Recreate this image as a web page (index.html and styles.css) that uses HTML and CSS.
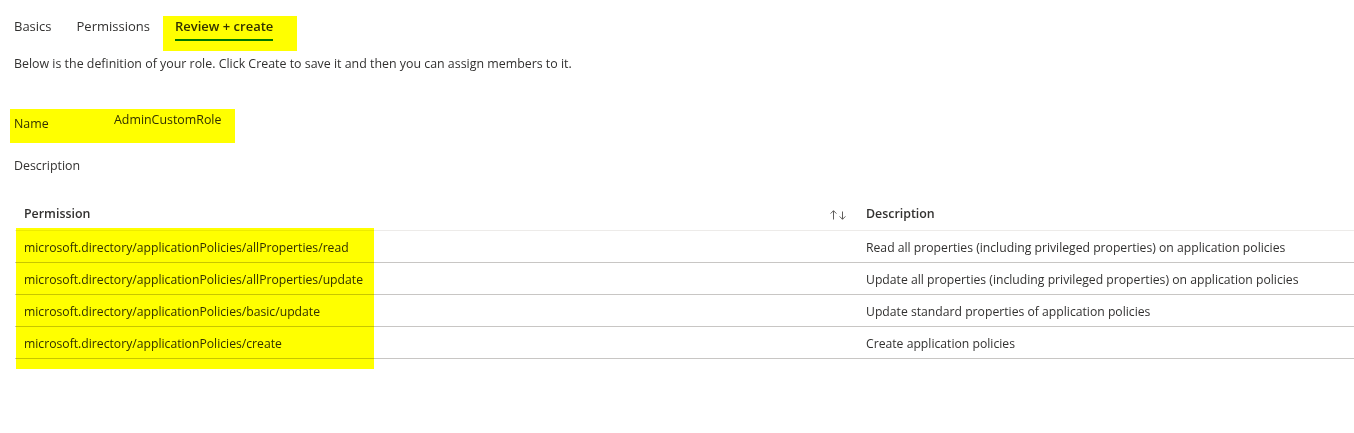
FILE: index.html
```html
<!DOCTYPE html>
<html lang="en">
<head>
<meta charset="utf-8">
<title>Review + create</title>
<link rel="stylesheet" href="styles.css">
</head>
<body>
<main class="page">
  <nav class="tabs">
    <a class="tab">Basics</a>
    <a class="tab">Permissions</a>
    <a class="tab tab-active mark-bg"><span class="tab-label">Review + create</span><span class="tab-bar"></span></a>
  </nav>
  <p class="intro">Below is the definition of your role. Click Create to save it and then you can assign members to it.</p>
  <dl class="fields">
    <div class="field field-name mark-bg">
      <dt class="field-label">Name</dt>
      <dd class="field-value">AdminCustomRole</dd>
    </div>
    <div class="field field-desc">
      <dt class="field-label">Description</dt>
      <dd class="field-value"></dd>
    </div>
  </dl>
  <div class="table-wrap">
    <table class="grid">
      <colgroup>
        <col class="col-perm">
        <col class="col-sort">
        <col class="col-desc">
      </colgroup>
      <thead>
        <tr>
          <th class="th-perm">Permission</th>
          <th class="th-sort">
            <svg class="sort-icon" width="17" height="10" viewBox="0 0 17 10" aria-hidden="true">
              <path d="M3.5 9.5V0.8M0.6 3.6L3.5 0.7L6.4 3.6" fill="none" stroke="#605e5c" stroke-width="1"/>
              <path d="M12.5 1.5V9.2M9.6 6.4L12.5 9.3L15.4 6.4" fill="none" stroke="#605e5c" stroke-width="1"/>
            </svg>
          </th>
          <th class="th-desc">Description</th>
        </tr>
      </thead>
      <tbody>
        <tr>
          <td class="td-perm">microsoft.directory/applicationPolicies/allProperties/read</td>
          <td></td>
          <td class="td-desc">Read all properties (including privileged properties) on application policies</td>
        </tr>
        <tr>
          <td class="td-perm">microsoft.directory/applicationPolicies/allProperties/update</td>
          <td></td>
          <td class="td-desc">Update all properties (including privileged properties) on application policies</td>
        </tr>
        <tr>
          <td class="td-perm">microsoft.directory/applicationPolicies/basic/update</td>
          <td></td>
          <td class="td-desc">Update standard properties of application policies</td>
        </tr>
        <tr>
          <td class="td-perm">microsoft.directory/applicationPolicies/create</td>
          <td></td>
          <td class="td-desc">Create application policies</td>
        </tr>
      </tbody>
    </table>
    <div class="mark-overlay"></div>
  </div>
</main>
</body>
</html>
```

FILE: styles.css
```css
* { box-sizing: border-box; }

html, body {
  margin: 0;
  padding: 0;
  background: #ffffff;
}

body {
  font-family: "Open Sans", "Noto Sans", "Liberation Sans", sans-serif;
  font-size: 12.4px;
  color: #323130;
}

.page {
  padding: 16px 0 0 14px;
  min-height: 433px;
  background: #ffffff;
}

.mark-bg {
  background: #ffff00;
}

/* Tabs */
.tabs {
  display: flex;
  align-items: flex-start;
  gap: 25px;
  height: 35px;
}

.tab {
  display: block;
  font-size: 13px;
  line-height: 20px;
  color: #323130;
  cursor: pointer;
}

.tab-active {
  display: flex;
  flex-direction: column;
  align-items: flex-start;
  margin-left: -12px;
  padding: 0 24px 10px 12px;
  height: 35px;
  color: #323100;
  font-weight: 600;
}

.tab-label {
  display: block;
  line-height: 20px;
}

.tab-bar {
  display: block;
  align-self: stretch;
  height: 3px;
  margin-top: 3px;
  background: #007800;
}

/* Intro */
.intro {
  margin: 3px 0 0 0;
  line-height: 20px;
  font-size: 12.4px;
}

/* Fields */
.fields {
  margin: 35px 0 0 0;
}

.field {
  display: flex;
  align-items: flex-start;
  margin: 0;
}

.field-label {
  width: 100px;
  line-height: 20px;
  font-size: 12.4px;
}

.field-value {
  margin: 0;
  line-height: 20px;
  font-size: 12.4px;
}

.field-name {
  width: 225px;
  height: 34px;
  margin-left: -4px;
  padding: 1px 0 0 4px;
  color: #323100;
}

.field-name .field-label {
  padding-top: 4px;
}

.field-desc {
  margin-top: 13px;
}

/* Table */
.table-wrap {
  position: relative;
  margin: 19px 0 0 1px;
  padding-bottom: 12px;
}

.grid {
  width: 100%;
  border-collapse: collapse;
  table-layout: fixed;
}

.col-perm { width: 807px; }
.col-sort { width: 35px; }

.grid th {
  text-align: left;
  font-weight: 600;
  font-size: 12.4px;
  line-height: 20px;
  padding: 9px 0 6px 9px;
  border-bottom: 1px solid #edebe9;
  color: #323130;
}

.grid th.th-sort {
  padding-left: 8px;
  vertical-align: middle;
}

.sort-icon {
  display: block;
  margin-top: 1px;
}

.grid td {
  font-size: 12.2px;
  line-height: 20px;
  padding: 7px 0 4px 9px;
  border-bottom: 1px solid #c8c6c4;
  white-space: nowrap;
  color: #323130;
}

.mark-overlay {
  position: absolute;
  left: 1px;
  top: 33px;
  width: 358px;
  height: 141px;
  background: #ffff00;
  mix-blend-mode: multiply;
  pointer-events: none;
}
```
